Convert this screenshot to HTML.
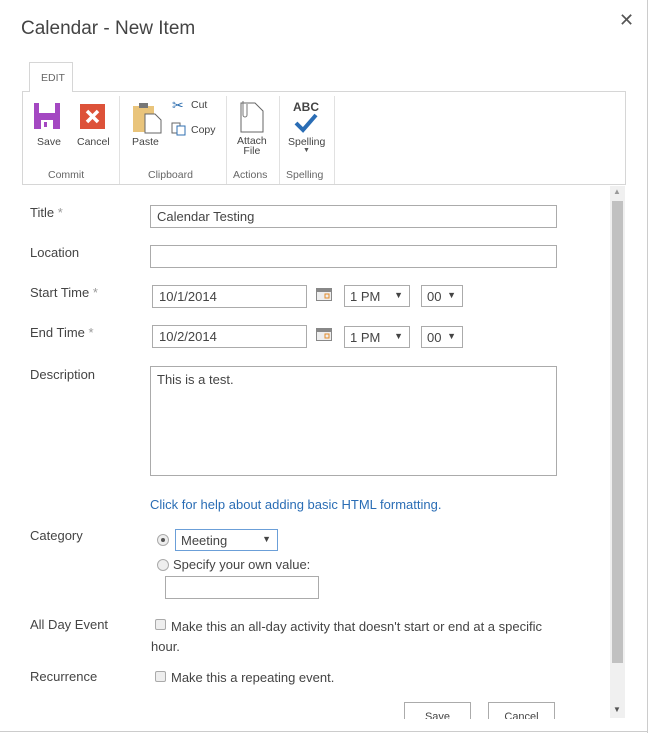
<!DOCTYPE html>
<html><head><style>
*{margin:0;padding:0;box-sizing:border-box}
body{width:650px;height:735px;background:#fff;position:relative;overflow:hidden;font-family:"Liberation Sans",sans-serif;color:#444;font-size:13px}
.a{position:absolute;white-space:nowrap}
.box{position:absolute;border:1px solid #ababab;background:#fff}
.lbl{position:absolute;left:30px;font-size:13px;color:#444}
.req{color:#999}
.in{position:absolute;font-size:13px;color:#444;padding:3px 0 0 6px;border:1px solid #ababab;background:#fff}
.sm{font-size:10.5px;color:#444;text-align:center}
.gl{font-size:10.5px;color:#666;position:absolute;top:169px}
.sep{position:absolute;top:96px;width:1px;height:88px;background:#e1e1e1}
.sel{position:absolute;border:1px solid #ababab;font-size:13px;padding:3px 0 0 5px;color:#444}
.sel b{position:absolute;right:6px;top:4px;font-size:9px}
.cb{position:absolute;width:11px;height:11px;border:1px solid #aaa;background:#eee;border-radius:2px}
</style></head><body>
<div class="a" style="right:2px;top:0;width:1px;height:733px;background:#ccc"></div>
<div class="a" style="left:0;top:731px;width:648px;height:1px;background:#ccc"></div>
<div class="a" style="left:21px;top:18px;font-size:19px;color:#444">Calendar - New Item</div>
<div class="a" style="left:619px;top:10px;font-size:18px;color:#555">✕</div>

<!-- ribbon -->
<div class="a" style="left:29px;top:62px;width:44px;height:30px;border:1px solid #d6d6d6;border-bottom:none;background:#fff;z-index:2"></div>
<div class="a" style="left:41px;top:72px;font-size:10.5px;color:#666;z-index:3">EDIT</div>
<div class="a" style="left:22px;top:91px;width:604px;height:94px;border:1px solid #d6d6d6"></div>
<div class="sep" style="left:119px"></div><div class="sep" style="left:226px"></div><div class="sep" style="left:279px"></div><div class="sep" style="left:334px"></div>
<svg class="a" style="left:34px;top:103px" width="28" height="26"><rect width="26" height="26" fill="#a448c2"/><rect x="5" y="0" width="16" height="10" fill="#fff"/><rect x="7" y="17" width="12" height="9" fill="#fff"/><rect x="10" y="19" width="3" height="5" fill="#a448c2"/></svg>
<svg class="a" style="left:80px;top:104px" width="26" height="26"><rect width="25" height="25" fill="#dd5239"/><path d="M7 7L18 18M18 7L7 18" stroke="#fff" stroke-width="3.5"/></svg>
<div class="a sm" style="left:37px;top:136px">Save</div>
<div class="a sm" style="left:77px;top:136px">Cancel</div>
<div class="gl" style="left:48px">Commit</div>
<svg class="a" style="left:131px;top:100px" width="34" height="34"><rect x="2" y="6" width="21" height="26" fill="#e9c47b"/><rect x="8" y="3" width="9" height="5" fill="#777"/><path d="M14 14h10l6 6v13H14z" fill="#fff" stroke="#666"/></svg>
<div class="a sm" style="left:132px;top:136px">Paste</div>
<div class="a" style="left:172px;top:97px;font-size:14px;color:#2f6fb0">✂</div>
<div class="a sm" style="left:191px;top:99px">Cut</div>
<svg class="a" style="left:171px;top:122px" width="16" height="14"><rect x="1" y="1" width="8" height="10" fill="#fff" stroke="#666"/><rect x="6" y="4" width="8" height="9" fill="#fff" stroke="#2f6fb0"/></svg>
<div class="a sm" style="left:191px;top:124px">Copy</div>
<div class="gl" style="left:148px">Clipboard</div>
<svg class="a" style="left:237px;top:100px" width="30" height="34"><path d="M4 3h14l8 8v21H4z" fill="#fff" stroke="#666"/><path d="M6 1v14a2 2 0 004 0V4" fill="none" stroke="#777"/></svg>
<div class="a sm" style="left:237px;top:136px;line-height:10px">Attach<br>File</div>
<div class="gl" style="left:233px">Actions</div>
<div class="a" style="left:293px;top:100px;font-size:12px;color:#444;font-weight:bold">ABC</div>
<svg class="a" style="left:293px;top:112px" width="26" height="22"><path d="M3 11l7 7L23 3" fill="none" stroke="#2a6db5" stroke-width="4"/></svg>
<div class="a sm" style="left:288px;top:136px">Spelling</div>
<div class="a" style="left:303px;top:147px;font-size:7px;color:#555">▼</div>
<div class="gl" style="left:286px">Spelling</div>

<!-- scrollbar -->
<div class="a" style="left:610px;top:186px;width:15px;height:532px;background:#f0f0f0"></div>
<div class="a" style="left:612px;top:201px;width:11px;height:462px;background:#c1c1c1"></div>
<div class="a" style="left:613px;top:187px;font-size:8px;color:#999">▲</div>
<div class="a" style="left:613px;top:705px;font-size:8px;color:#555">▼</div>

<div class="lbl" style="top:205px">Title <span class="req">*</span></div>
<div class="in" style="left:150px;top:205px;width:407px;height:23px">Calendar Testing</div>
<div class="lbl" style="top:245px">Location</div>
<div class="in" style="left:150px;top:245px;width:407px;height:23px"></div>
<div class="lbl" style="top:285px">Start Time <span class="req">*</span></div>
<div class="in" style="left:152px;top:285px;width:155px;height:23px">10/1/2014</div>
<div class="lbl" style="top:325px">End Time <span class="req">*</span></div>
<div class="in" style="left:152px;top:325px;width:155px;height:23px">10/2/2014</div>
<svg class="a" style="left:316px;top:288px" width="17" height="14"><rect x=".5" y=".5" width="15" height="12" fill="#eee" stroke="#888"/><rect x="1" y="1" width="14" height="3" fill="#888"/><rect x="9" y="6" width="4" height="4" fill="none" stroke="#e38a2a"/></svg>
<svg class="a" style="left:316px;top:328px" width="17" height="14"><rect x=".5" y=".5" width="15" height="12" fill="#eee" stroke="#888"/><rect x="1" y="1" width="14" height="3" fill="#888"/><rect x="9" y="6" width="4" height="4" fill="none" stroke="#e38a2a"/></svg>
<div class="sel" style="left:344px;top:285px;width:66px;height:22px">1 PM<b>▼</b></div>
<div class="sel" style="left:421px;top:285px;width:42px;height:22px">00<b>▼</b></div>
<div class="sel" style="left:344px;top:326px;width:66px;height:22px">1 PM<b>▼</b></div>
<div class="sel" style="left:421px;top:326px;width:42px;height:22px">00<b>▼</b></div>
<div class="lbl" style="top:367px">Description</div>
<div class="in" style="left:150px;top:366px;width:407px;height:110px;padding-top:5px">This is a test.</div>
<div class="a" style="left:150px;top:497px;color:#2a6db5;font-size:13px">Click for help about adding basic HTML formatting.</div>
<div class="lbl" style="top:528px">Category</div>
<div class="a" style="left:157px;top:534px;width:12px;height:12px;border:1px solid #aaa;border-radius:50%;background:#eee"></div>
<div class="a" style="left:161px;top:538px;width:4px;height:4px;border-radius:50%;background:#555"></div>
<div class="sel" style="left:175px;top:529px;width:103px;height:22px;border-color:#6b9fd8">Meeting<b>▼</b></div>
<div class="a" style="left:157px;top:559px;width:12px;height:12px;border:1px solid #aaa;border-radius:50%;background:#eee"></div>
<div class="a" style="left:173px;top:557px;font-size:13px">Specify your own value:</div>
<div class="a" style="left:165px;top:576px;width:154px;height:23px;border:1px solid #ababab"></div>
<div class="lbl" style="top:617px">All Day Event</div>
<div class="cb" style="left:155px;top:619px"></div>
<div class="a" style="left:171px;top:619px">Make this an all-day activity that doesn't start or end at a specific</div>
<div class="a" style="left:151px;top:639px">hour.</div>
<div class="lbl" style="top:669px">Recurrence</div>
<div class="cb" style="left:155px;top:671px"></div>
<div class="a" style="left:171px;top:670px">Make this a repeating event.</div>
<div class="a" style="left:404px;top:702px;width:67px;height:17px;border:1px solid #ababab;border-bottom:none;font-size:11px;text-align:center;padding-top:8px;overflow:hidden;color:#444">Save</div>
<div class="a" style="left:488px;top:702px;width:67px;height:17px;border:1px solid #ababab;border-bottom:none;font-size:11px;text-align:center;padding-top:8px;overflow:hidden;color:#444">Cancel</div>
</body></html>
